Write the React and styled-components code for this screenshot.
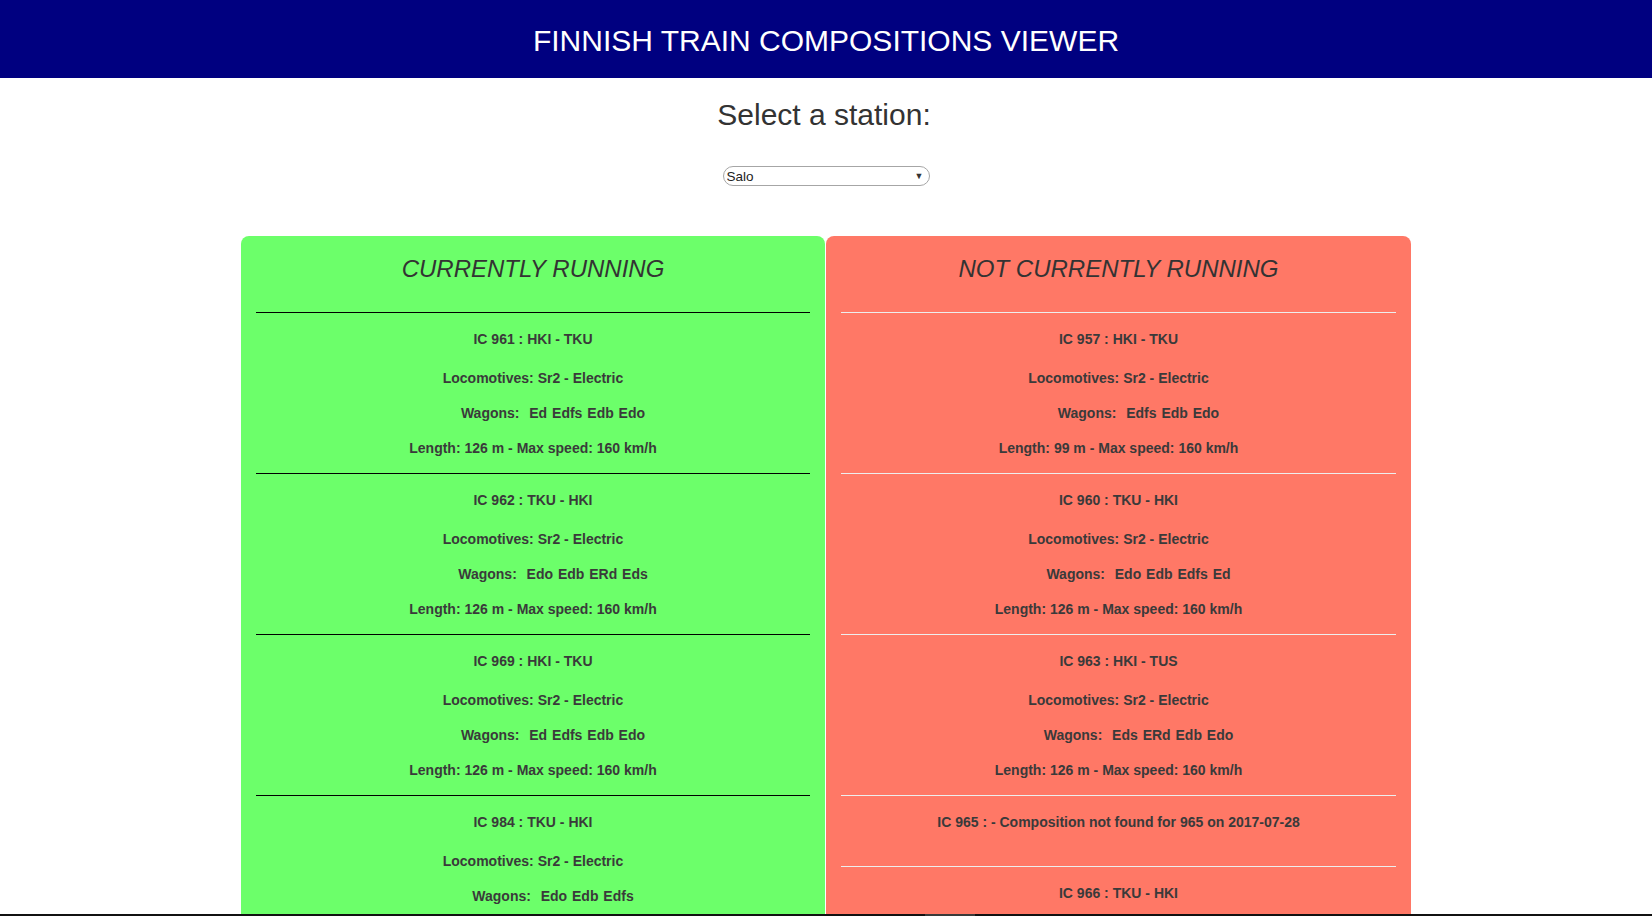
import React from "react";
import styled, { createGlobalStyle } from "styled-components";

const GlobalStyle = createGlobalStyle`
  html, body { margin: 0; padding: 0; background: #fff; }
  body {
    font-family: "Liberation Sans", Arial, Helvetica, sans-serif;
    color: #333;
    font-size: 14px;
    line-height: 1.42857;
    overflow: hidden;
  }
  * { box-sizing: border-box; }
`;

const Header = styled.header`
  height: 78px;
  background: #000080;
  display: flex;
  align-items: center;
  justify-content: center;
`;

const Title = styled.h1`
  margin: 4px 0 0;
  color: #fff;
  font-size: 30px;
  font-weight: 400;
  line-height: 1;
`;

const Picker = styled.section`
  display: flex;
  flex-direction: column;
  align-items: center;
`;

const PickerLabel = styled.h2`
  margin: 20px 4px 35px 0;
  font-size: 30px;
  font-weight: 400;
  line-height: 1.1;
  color: #333;
`;

const SelectWrap = styled.div`
  position: relative;
  width: 207px;
  height: 20px;
`;

const Select = styled.select`
  appearance: none;
  -webkit-appearance: none;
  width: 100%;
  height: 100%;
  border: 1px solid #a6a6a6;
  border-radius: 10px;
  background: #fff;
  font-family: "Liberation Sans", Arial, sans-serif;
  font-size: 13.5px;
  color: #222;
  padding: 1px 18px 0 3px;
  line-height: 17px;
  outline: none;
`;

const Arrow = styled.span`
  position: absolute;
  right: 6px;
  top: 4px;
  font-size: 9px;
  line-height: 12px;
  color: #333;
  pointer-events: none;
`;

const Container = styled.main`
  width: 1170px;
  margin: 50px auto 0;
  display: grid;
  grid-template-columns: 584px 585px;
  column-gap: 1px;
`;

const Panel = styled.div`
  background: ${(p) => (p.$running ? "#6cff6a" : "#ff7866")};
  border-radius: 8px 8px 0 0;
  padding: 0 15px;
`;

const PanelTitle = styled.h3`
  margin: 0;
  padding: 20px 0 30px;
  font-size: 24px;
  font-weight: 400;
  font-style: italic;
  line-height: 26px;
  text-align: center;
  color: #333;
`;

const Row = styled.div`
  border-top: 1px solid ${(p) => (p.$running ? "#000" : "#eee")};
  padding: 16px 0 15px;
  text-align: center;
`;

const RowTitle = styled.p`
  margin: 0 0 19px;
  font-size: 14px;
  font-weight: 700;
  line-height: 20px;
  color: #3a3a3a;
`;

const Detail = styled.p`
  margin: 0 0 15px;
  font-size: 14px;
  font-weight: 700;
  line-height: 20px;
  color: #3a3a3a;
  padding-left: ${(p) => (p.$indent ? "40px" : "0")};
  word-spacing: ${(p) => (p.$indent ? "1px" : "0")};
  &:last-child { margin-bottom: 0; }
`;

const BottomEdge = styled.div`
  position: fixed;
  left: 0;
  right: 0;
  bottom: 0;
  height: 2px;
  background: #111;
  &::after {
    content: "";
    position: absolute;
    left: 925px;
    width: 50px;
    top: 0;
    bottom: 0;
    background: #3a3a3a;
  }
`;

const running = [
  { id: "IC 961 : HKI - TKU", loco: "Sr2 - Electric", wagons: "Ed Edfs Edb Edo", len: "126 m", speed: "160 km/h" },
  { id: "IC 962 : TKU - HKI", loco: "Sr2 - Electric", wagons: "Edo Edb ERd Eds", len: "126 m", speed: "160 km/h" },
  { id: "IC 969 : HKI - TKU", loco: "Sr2 - Electric", wagons: "Ed Edfs Edb Edo", len: "126 m", speed: "160 km/h" },
  { id: "IC 984 : TKU - HKI", loco: "Sr2 - Electric", wagons: "Edo Edb Edfs", len: "99 m", speed: "160 km/h" },
];

const notRunning = [
  { id: "IC 957 : HKI - TKU", loco: "Sr2 - Electric", wagons: "Edfs Edb Edo", len: "99 m", speed: "160 km/h" },
  { id: "IC 960 : TKU - HKI", loco: "Sr2 - Electric", wagons: "Edo Edb Edfs Ed", len: "126 m", speed: "160 km/h" },
  { id: "IC 963 : HKI - TUS", loco: "Sr2 - Electric", wagons: "Eds ERd Edb Edo", len: "126 m", speed: "160 km/h" },
  { id: "IC 965 : - Composition not found for 965 on 2017-07-28", missing: true },
  { id: "IC 966 : TKU - HKI", loco: "Sr2 - Electric", wagons: "Edo Edb Edfs", len: "99 m", speed: "160 km/h" },
];

function TrainRow({ train, isRunning }) {
  return (
    <Row $running={isRunning}>
      <RowTitle>{train.id}</RowTitle>
      {!train.missing && (
        <>
          <Detail>Locomotives: {train.loco}</Detail>
          <Detail $indent>{"Wagons:\u00a0 " + train.wagons}</Detail>
          <Detail>
            Length: {train.len} - Max speed: {train.speed}
          </Detail>
        </>
      )}
    </Row>
  );
}

export default function App() {
  return (
    <>
      <GlobalStyle />
      <Header>
        <Title>FINNISH TRAIN COMPOSITIONS VIEWER</Title>
      </Header>
      <Picker>
        <PickerLabel>Select a station:</PickerLabel>
        <SelectWrap>
          <Select defaultValue="Salo">
            <option>Helsinki</option>
            <option>Salo</option>
            <option>Turku</option>
          </Select>
          <Arrow>▼</Arrow>
        </SelectWrap>
      </Picker>
      <Container>
        <Panel $running>
          <PanelTitle>CURRENTLY RUNNING</PanelTitle>
          {running.map((t) => (
            <TrainRow key={t.id} train={t} isRunning />
          ))}
        </Panel>
        <Panel>
          <PanelTitle>NOT CURRENTLY RUNNING</PanelTitle>
          {notRunning.map((t) => (
            <TrainRow key={t.id} train={t} />
          ))}
        </Panel>
      </Container>
      <BottomEdge />
    </>
  );
}
